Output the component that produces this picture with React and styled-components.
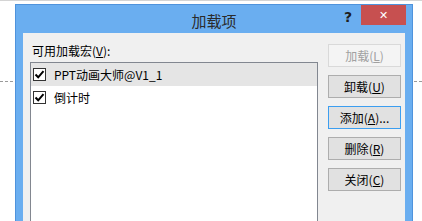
import React from "react";
import styled, { createGlobalStyle } from "styled-components";

const GlobalStyle = createGlobalStyle`
  html, body {
    margin: 0;
    padding: 0;
    background: #ffffff;
    overflow: hidden;
  }
  body {
    font-family: "Noto Sans CJK SC", "Noto Sans", sans-serif;
  }
`;

const items = [
  { text: "PPT动画大师@V1_1", checked: true, selected: true },
  { text: "倒计时", checked: true, selected: false },
];

const buttons = [
  { label: "加载", key: "L", disabled: true },
  { label: "卸载", key: "U" },
  { label: "添加", key: "A", suffix: "...", focused: true },
  { label: "删除", key: "R" },
  { label: "关闭", key: "C" },
];

function CheckMark() {
  return (
    <svg width="11" height="11" viewBox="0 0 11 11">
      <path d="M1.5 5.5 L4.2 8.3 L9.5 2.2" fill="none" stroke="#000" strokeWidth="2" />
    </svg>
  );
}

function App() {
  return (
    <>
      <GlobalStyle />
      <Page>
        <TopLine />
        <Backdrop />
        <Dialog>
          <TitleBar>
            <Title>加载项</Title>
            <Help>?</Help>
            <Close>✕</Close>
          </TitleBar>
          <Client>
            <ListColumn>
              <Label>
                可用加载宏(<u>V</u>):
              </Label>
              <ListBox>
                {items.map((it) => (
                  <Row key={it.text} selected={it.selected}>
                    <Box>{it.checked && <CheckMark />}</Box>
                    <RowText>{it.text}</RowText>
                  </Row>
                ))}
              </ListBox>
            </ListColumn>
            <ButtonColumn>
              {buttons.map((b) => (
                <Button key={b.key} disabled={b.disabled} focused={b.focused}>
                  {b.label}(<u>{b.key}</u>){b.suffix}
                </Button>
              ))}
            </ButtonColumn>
          </Client>
        </Dialog>
      </Page>
    </>
  );
}

const Page = styled.div`
  position: relative;
  width: 422px;
  height: 221px;
  overflow: hidden;
  background: #ffffff;
`;

const TopLine = styled.div`
  height: 1px;
  background: #d4d4d4;
`;

const Backdrop = styled.div`
  position: absolute;
  left: 0;
  right: 0;
  top: 81px;
  border-top: 1px dashed #9a9a9a;
`;

const Dialog = styled.div`
  position: relative;
  margin: 3px 0 0 15px;
  width: 398px;
  height: 260px;
  background: #6aaef0;
  border: 1px solid #4f93dc;
  padding: 0 7px;
  box-sizing: border-box;
  display: flex;
  flex-direction: column;
`;

const TitleBar = styled.div`
  position: relative;
  height: 28px;
  display: flex;
  align-items: center;
  justify-content: center;
`;

const Title = styled.div`
  font-size: 15px;
  color: #2b2b2b;
  margin-top: 2px;
`;

const Help = styled.div`
  position: absolute;
  right: 53px;
  top: 4px;
  font-family: "DejaVu Sans", sans-serif;
  font-weight: bold;
  font-size: 14px;
  color: #1e1e1e;
`;

const Close = styled.div`
  position: absolute;
  right: -1px;
  top: 0;
  width: 45px;
  height: 20px;
  background: #c75050;
  color: #ffffff;
  font-family: "DejaVu Sans", sans-serif;
  font-weight: bold;
  font-size: 11px;
  display: flex;
  align-items: center;
  justify-content: center;
`;

const Client = styled.div`
  flex: 1;
  background: #f0f0f0;
  display: flex;
  padding: 11px 7px 0 7px;
  gap: 10px;
`;

const ListColumn = styled.div`
  display: flex;
  flex-direction: column;
`;

const Label = styled.div`
  font-size: 12px;
  color: #000;
  line-height: 14px;
  padding-left: 2px;
  margin-bottom: 4px;
  u {
    text-underline-offset: 1px;
  }
`;

const ListBox = styled.div`
  width: 288px;
  height: 200px;
  box-sizing: border-box;
  border: 1px solid #828790;
  background: #ffffff;
  display: flex;
  flex-direction: column;
`;

const Row = styled.div`
  height: 23px;
  display: flex;
  align-items: center;
  padding-left: 2px;
  gap: 8px;
  background: ${(p) => (p.selected ? "#e5e5e5" : "transparent")};
`;

const Box = styled.div`
  width: 13px;
  height: 13px;
  box-sizing: border-box;
  border: 1px solid #333333;
  background: #ffffff;
  display: flex;
  align-items: center;
  justify-content: center;
`;

const RowText = styled.span`
  font-size: 12px;
  color: #000;
`;

const ButtonColumn = styled.div`
  display: flex;
  flex-direction: column;
  gap: 8px;
`;

const Button = styled.div`
  width: 73px;
  height: 23px;
  box-sizing: border-box;
  border: 1px solid
    ${(p) => (p.focused ? "#3c9ef0" : p.disabled ? "#d9d9d9" : "#adadad")};
  background: ${(p) => (p.disabled ? "#f4f4f4" : "#e1e1e1")};
  color: ${(p) => (p.disabled ? "#a0a0a0" : "#000")};
  font-size: 12px;
  display: flex;
  align-items: center;
  justify-content: center;
  u {
    text-underline-offset: 1px;
  }
`;

export default App;
